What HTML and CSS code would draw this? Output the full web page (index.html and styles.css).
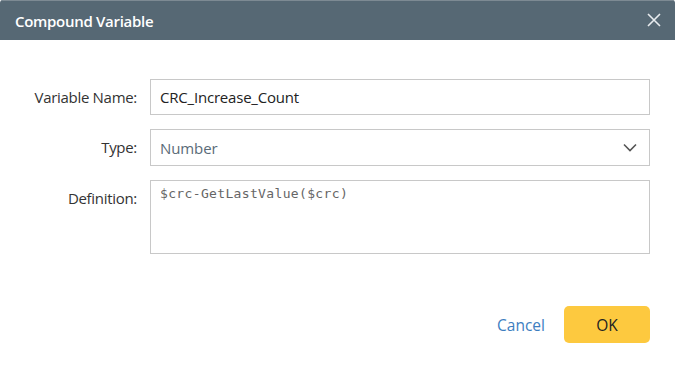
FILE: index.html
```html
<!DOCTYPE html>
<html>
<head>
<meta charset="utf-8">
<link rel="stylesheet" href="styles.css">
</head>
<body>
<div class="dialog">
  <div class="header">
    <span class="title">Compound Variable</span>
    <svg class="close" width="14" height="14" viewBox="0 0 14 14"><path d="M1 1L13 13M13 1L1 13" stroke="#e8ecef" stroke-width="1.6" fill="none"/></svg>
  </div>
  <div class="body">
    <div class="row">
      <label class="label">Variable Name:</label>
      <div class="field input">CRC_Increase_Count</div>
    </div>
    <div class="row">
      <label class="label">Type:</label>
      <div class="field select"><span>Number</span>
        <svg width="14" height="9" viewBox="0 0 14 9"><path d="M1 1.5L7 7.5L13 1.5" stroke="#555" stroke-width="1.6" fill="none"/></svg>
      </div>
    </div>
    <div class="row">
      <label class="label def">Definition:</label>
      <div class="field textarea">$crc-GetLastValue($crc)</div>
    </div>
  </div>
  <div class="footer">
    <span class="cancel">Cancel</span>
    <span class="ok">OK</span>
  </div>
</div>
</body>
</html>
```
FILE: styles.css
```css
html, body { margin: 0; padding: 0; background: #fff; }
body { font-family: "Open Sans", "Noto Sans", sans-serif; }
.dialog { width: 675px; height: 371px; display: flex; flex-direction: column; border-radius: 3px; overflow: hidden; background: #fff; box-sizing: border-box; }
.header { height: 40px; background: #566874; border-top: 1px solid #7d8a93; display: flex; align-items: center; justify-content: space-between; padding: 0 14px 0 15px; box-sizing: border-box; }
.title { color: #fff; font-size: 15px; font-weight: 600; letter-spacing: -0.3px; }
.close { display: block; margin-top: -2px; }
.body { padding: 39px 25px 0 0; display: flex; flex-direction: column; gap: 14px; }
.row { display: flex; align-items: flex-start; }
.label { width: 150px; text-align: right; padding-right: 13px; box-sizing: border-box; font-size: 15px; color: #333; line-height: 36px; letter-spacing: -0.3px; }
.label.def { line-height: 36px; }
.field { flex: 1; border: 1px solid #c8c8c8; box-sizing: border-box; font-size: 15px; padding: 0 9px; }
.input { height: 36px; line-height: 34px; color: #222; letter-spacing: -0.2px; }
.select { height: 37px; display: flex; align-items: center; justify-content: space-between; color: #5a6b78; padding-right: 12px; letter-spacing: -0.1px; }
.textarea { height: 74px; font-family: "DejaVu Sans Mono", "Liberation Mono", monospace; font-size: 13px; color: #666; padding-top: 5px; letter-spacing: 0.35px; }
.footer { margin-top: auto; display: flex; justify-content: flex-end; align-items: center; gap: 19px; padding: 0 25px 28px 0; }
.cancel { color: #3d7ebf; font-size: 15.5px; }
.ok { width: 86px; height: 37px; background: #fdc93f; border-radius: 5px; display: flex; align-items: center; justify-content: center; font-size: 15.5px; color: #222; }
```
